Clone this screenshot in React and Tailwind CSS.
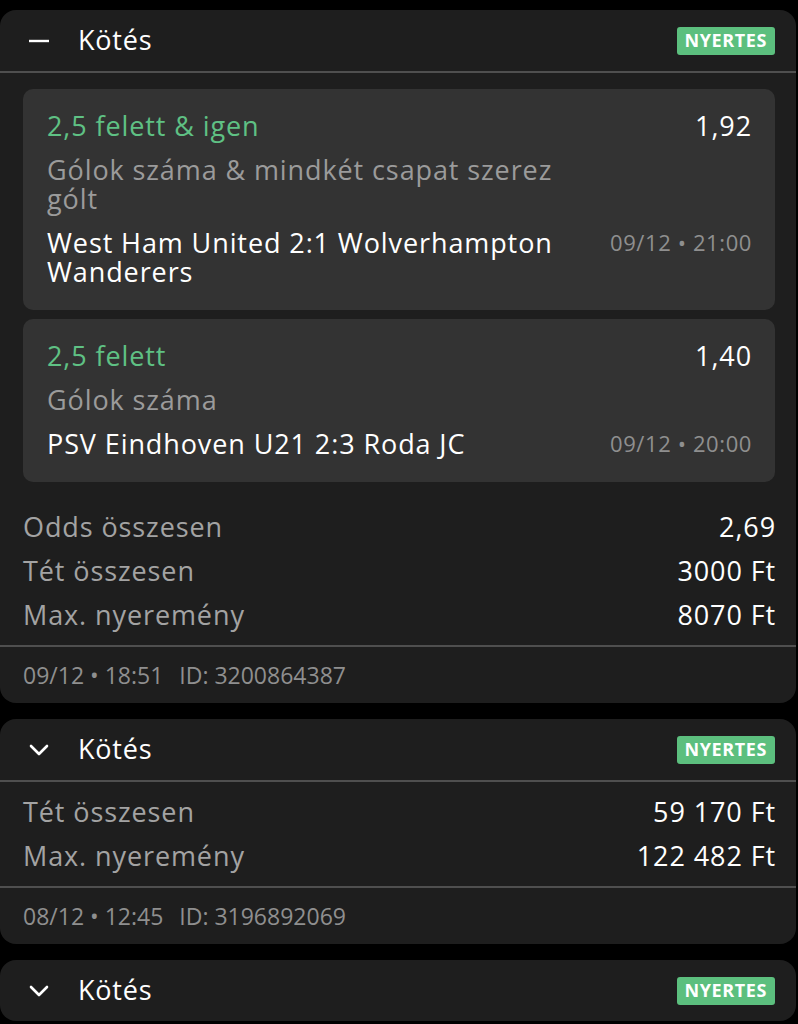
import React from "react";

const bets = [
  {
    id: "3200864387",
    placed: "09/12 • 18:51",
    open: true,
    selections: [
      {
        pick: "2,5 felett & igen",
        market: "Gólok száma & mindkét csapat szerez gólt",
        event: "West Ham United 2:1 Wolverhampton Wanderers",
        odds: "1,92",
        date: "09/12 • 21:00",
      },
      {
        pick: "2,5 felett",
        market: "Gólok száma",
        event: "PSV Eindhoven U21 2:3 Roda JC",
        odds: "1,40",
        date: "09/12 • 20:00",
      },
    ],
    totals: [
      ["Odds összesen", "2,69"],
      ["Tét összesen", "3000 Ft"],
      ["Max. nyeremény", "8070 Ft"],
    ],
  },
  {
    id: "3196892069",
    placed: "08/12 • 12:45",
    open: false,
    selections: [],
    totals: [
      ["Tét összesen", "59 170 Ft"],
      ["Max. nyeremény", "122 482 Ft"],
    ],
  },
  {
    id: "3196000000",
    placed: "",
    open: false,
    selections: [],
    totals: [],
    cut: true,
  },
];

const MinusIcon = () => (
  <svg width="22" height="22" viewBox="0 0 22 22" fill="none">
    <path d="M1 11h20" stroke="white" strokeWidth="2.4" />
  </svg>
);

const ChevronIcon = () => (
  <svg width="22" height="22" viewBox="0 0 22 22" fill="none">
    <path d="M3 7l8 8 8-8" stroke="white" strokeWidth="2.6" strokeLinecap="round" strokeLinejoin="round" />
  </svg>
);

const Selection = ({ s }) => (
  <div className="rounded-[10px] bg-[#333333] pl-6 pr-[23px] pt-[22px] pb-[24px] grid grid-cols-[1fr_auto] gap-x-10 gap-y-[15px] leading-[29px] text-[27px] tracking-[0.9px]">
    <div className="text-[#5fc184]">{s.pick}</div>
    <div className="text-white text-right font-medium">{s.odds}</div>
    <div className="text-[#9b9b9b]">{s.market}</div>
    <div></div>
    <div className="text-white font-medium">{s.event}</div>
    <div className="text-[22px] tracking-[0.6px] text-[#8f8f8f] text-right whitespace-nowrap">{s.date}</div>
  </div>
);

const BetCard = ({ bet }) => (
  <div className="mr-[2px] rounded-2xl bg-[#1e1e1e]">
    <div className="h-[61px] flex items-center pl-7 pr-[21px]">
      {bet.open ? <MinusIcon /> : <ChevronIcon />}
      <span className="ml-7 text-[27px] tracking-[0.8px] font-medium text-white">Kötés</span>
      <span className="ml-auto h-[28px] px-[8px] flex items-center rounded-[3px] bg-[#5cbf7e] text-[18px] font-bold tracking-[0.6px] text-white">
        NYERTES
      </span>
    </div>
    {!bet.cut && (
      <>
        <div className="h-[2px] bg-[#4f4f4f]"></div>
        {bet.selections.length > 0 && (
          <div className="pl-[23px] pr-[21px] pt-[16px] flex flex-col gap-[9px]">
            {bet.selections.map((s) => (
              <Selection s={s} key={s.pick} />
            ))}
          </div>
        )}
        <div className={`pl-[23px] pr-[20px] ${bet.selections.length > 0 ? "pt-[30px]" : "pt-[15px]"} pb-[16px] flex flex-col gap-[15px] leading-[29px] text-[27px] tracking-[0.9px]`}>
          {bet.totals.map(([label, value]) => (
            <div className="flex justify-between" key={label}>
              <span className="text-[#a3a3a3]">{label}</span>
              <span className="text-white font-medium">{value}</span>
            </div>
          ))}
        </div>
        <div className="h-[2px] bg-[#4f4f4f]"></div>
        <div className="h-[56px] flex items-center px-[23px] text-[23px] text-[#8f8f8f]">
          <span>{bet.placed}</span>
          <span className="ml-4">ID: {bet.id}</span>
        </div>
      </>
    )}
  </div>
);

export default function App() {
  return (
    <div
      className="min-h-screen bg-black pt-[10px] flex flex-col gap-4 overflow-hidden h-[1024px]"
      style={{ fontFamily: '"Open Sans", "Noto Sans", sans-serif' }}
    >
      {bets.map((bet) => (
        <BetCard bet={bet} key={bet.id} />
      ))}
    </div>
  );
}
